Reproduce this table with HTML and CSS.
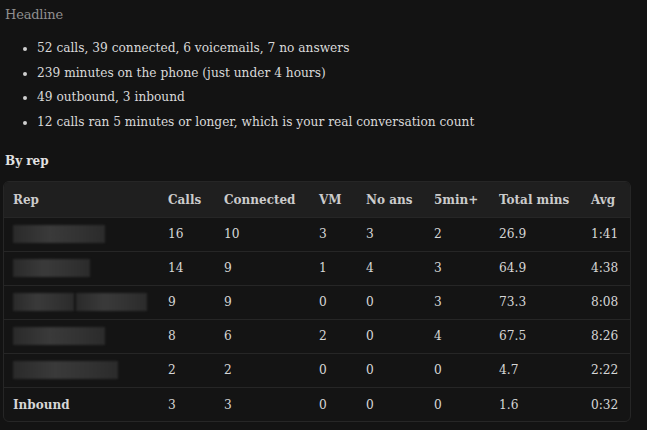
FILE: index.html
```html
<!DOCTYPE html>
<html>
<head>
<meta charset="utf-8">
<link rel="stylesheet" href="styles.css">
</head>
<body>
<div class="page">
  <div class="headline">Headline</div>
  <ul class="bullets">
    <li>52 calls, 39 connected, 6 voicemails, 7 no answers</li>
    <li>239 minutes on the phone (just under 4 hours)</li>
    <li>49 outbound, 3 inbound</li>
    <li>12 calls ran 5 minutes or longer, which is your real conversation count</li>
  </ul>
  <div class="section">By rep</div>
  <div class="table-wrap">
    <table class="reps">
      <thead>
        <tr>
          <th class="c-rep">Rep</th><th class="c-calls">Calls</th><th class="c-conn">Connected</th><th class="c-vm">VM</th><th class="c-na">No ans</th><th class="c-5m">5min+</th><th class="c-tot">Total mins</th><th class="c-avg">Avg</th>
        </tr>
      </thead>
      <tbody>
        <tr><td><span class="redact" style="width:92px"></span></td><td>16</td><td>10</td><td>3</td><td>3</td><td>2</td><td>26.9</td><td>1:41</td></tr>
        <tr><td><span class="redact" style="width:77px"></span></td><td>14</td><td>9</td><td>1</td><td>4</td><td>3</td><td>64.9</td><td>4:38</td></tr>
        <tr><td><span class="redact" style="width:61px"></span><span class="redact" style="width:71px"></span></td><td>9</td><td>9</td><td>0</td><td>0</td><td>3</td><td>73.3</td><td>8:08</td></tr>
        <tr><td><span class="redact" style="width:92px"></span></td><td>8</td><td>6</td><td>2</td><td>0</td><td>4</td><td>67.5</td><td>8:26</td></tr>
        <tr><td><span class="redact" style="width:105px"></span></td><td>2</td><td>2</td><td>0</td><td>0</td><td>0</td><td>4.7</td><td>2:22</td></tr>
        <tr><td class="name">Inbound</td><td>3</td><td>3</td><td>0</td><td>0</td><td>0</td><td>1.6</td><td>0:32</td></tr>
      </tbody>
    </table>
  </div>
</div>
</body>
</html>
```
FILE: styles.css
```css
html, body {
  margin: 0;
  padding: 0;
  background: #131313;
}
body {
  font-family: "DejaVu Serif", "Liberation Serif", serif;
  color: #d9d9d9;
  font-size: 12.2px;
}
.page {
  padding: 6px 0 0 3px;
}
.headline {
  font-size: 13px;
  color: #8f8f8f;
  padding-left: 2px;
  line-height: 18px;
  letter-spacing: -0.2px;
}
.bullets {
  margin: 12px 0 0 0;
  padding: 0 0 0 34px;
}
.bullets li {
  line-height: 24.6px;
}
.bullets li::marker {
  color: #cfcfcf;
}
.section {
  margin-top: 18px;
  font-weight: bold;
  font-size: 12px;
  line-height: 18px;
  padding-left: 2px;
  color: #e2e2e2;
}
.table-wrap {
  margin-top: 11px;
  width: 626px;
  border: 1px solid #262626;
  border-radius: 6px;
  overflow: hidden;
  background: #141414;
}
.reps {
  width: 100%;
  border-collapse: collapse;
  table-layout: fixed;
}
.reps th, .reps td {
  box-sizing: border-box;
  text-align: left;
  padding: 0 0 0 9px;
  white-space: nowrap;
}
.reps th {
  background: #1f1f1f;
  height: 35px;
  font-weight: bold;
  color: #cbcbcb;
  font-size: 12px;
}
.reps td {
  height: 34px;
  border-top: 1px solid #262626;
  color: #d6d6d6;
}
.c-rep { width: 155px; }
.c-calls { width: 56px; }
.c-conn { width: 95px; }
.c-vm { width: 47px; }
.c-na { width: 68px; }
.c-5m { width: 65px; }
.c-tot { width: 92px; }
.c-avg { width: 48px; }
.redact {
  display: inline-block;
  height: 18px;
  vertical-align: middle;
  background: linear-gradient(90deg, #2a2a2a, #3a3a3a 40%, #333 70%, #2b2b2b);
  filter: blur(1.2px);
  margin-right: 2px;
}
.name {
  font-weight: bold;
  font-size: 12px;
}
```
